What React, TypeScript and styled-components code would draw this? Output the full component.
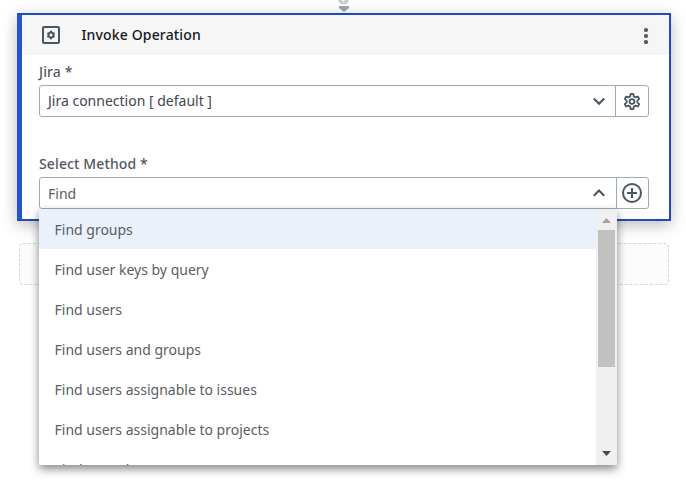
import React from "react";
import styled, { createGlobalStyle } from "styled-components";

const GlobalStyle = createGlobalStyle`
  * { box-sizing: border-box; }
  body {
    margin: 0;
    background: #fff;
    overflow: hidden;
    font-family: "Noto Sans", sans-serif;
    font-size: 14px;
    color: #595d64;
  }
`;

const Canvas = styled.main`
  width: 686px;
  height: 486px;
  overflow: hidden;
  display: flex;
  flex-direction: column;
`;

const Connector = styled.div`
  height: 13px;
  padding-left: 337px;
  flex: none;
  svg { display: block; }
`;

const Card = styled.section`
  width: 654px;
  height: 208px;
  flex: none;
  margin-left: 17px;
  background: #fff;
  border: 2px solid #2349b4;
  border-left: 5px solid #2754cb;
  box-shadow: 0 4px 15px rgba(0, 0, 0, 0.27);
  position: relative;
`;

const Header = styled.header`
  height: 40px;
  background: #f6f6f6;
  display: flex;
  align-items: center;
  padding: 0 17px 0 20px;
`;

const Title = styled.h1`
  flex: 1;
  margin: 0 0 0 21.5px;
  font-size: 14px;
  line-height: 20px;
  font-weight: 500;
  letter-spacing: 0.15px;
  color: #17191d;
`;

const Icon = styled.svg`
  display: block;
  flex: none;
`;

const Form = styled.div`
  padding: 7px 20px 0 17px;
`;

const Field = styled.div`
  height: 92px;
`;

const Label = styled.label`
  display: block;
  height: 23px;
  line-height: 20px;
  font-weight: 500;
  letter-spacing: 0.12px;
  color: #54585f;
`;

const ControlRow = styled.div`
  width: 610px;
  height: 32px;
  display: flex;
  border: 1px solid #9eabb3;
  border-radius: 3px;
  position: relative;
`;

const Select = styled.div<{ $dark?: boolean }>`
  flex: 1;
  display: flex;
  align-items: center;
  justify-content: space-between;
  padding: 0 ${(p) => (p.$dark ? 9 : 10)}px ${(p) => (p.$dark ? 1 : 0)}px 8px;
  color: ${(p) => (p.$dark ? "#3f464f" : "#595d64")};
`;

const Action = styled.button<{ $width: number }>`
  width: ${(p) => p.$width}px;
  padding: 0 1px 0 0;
  border: 0;
  border-left: 1px solid #9eabb3;
  background: none;
  display: flex;
  align-items: center;
  justify-content: center;
`;

const Menu = styled.div`
  position: absolute;
  z-index: 1;
  top: 31px;
  left: -1px;
  width: 578px;
  height: 256px;
  background: #fff;
  display: flex;
  overflow: hidden;
  border-radius: 0 0 2px 2px;
`;

const MenuShadow = styled.div`
  position: absolute;
  top: 31px;
  left: -1px;
  width: 578px;
  height: 256px;
  border-radius: 0 0 2px 2px;
  box-shadow: 0 4px 10px rgba(0, 0, 0, 0.48);
  clip-path: inset(-4px -24px -24px -24px);
`;

const Options = styled.div`
  flex: 1;
`;

const Option = styled.div<{ $active?: boolean }>`
  height: 40px;
  line-height: 42px;
  padding-left: 15.5px;
  background: ${(p) => (p.$active ? "#eaf1fb" : "#fff")};
`;

const Scrollbar = styled.div`
  width: 21px;
  background: #f0f0f0;
  display: flex;
  flex-direction: column;
  align-items: center;
  justify-content: space-between;
`;

const Thumb = styled.div`
  width: 17px;
  height: 137px;
  background: #c1c1c1;
  margin-bottom: auto;
`;

const ScrollArrow = styled.svg`
  display: block;
  width: 21px;
  height: 21px;
  flex: none;
`;

const DropZone = styled.div`
  width: 650px;
  height: 42px;
  flex: none;
  margin: 22px 0 0 19px;
  background: #fcfcfc;
  border: 1px dashed #d3d6d9;
  border-radius: 4px;
`;

const methods = [
  "Find groups",
  "Find user keys by query",
  "Find users",
  "Find users and groups",
  "Find users assignable to issues",
  "Find users assignable to projects",
  "Find users by query",
];

const gearPath = (cx: number, cy: number, outer: number, inner: number, tooth = 0.2, root = 0.34) => {
  const points: string[] = [];
  for (let i = 0; i < 6; i++) {
    const a = (i * Math.PI) / 3 - Math.PI / 2;
    [[-root, inner], [-tooth, outer], [tooth, outer], [root, inner]].forEach(([d, r]) => {
      points.push(`${(cx + Math.cos(a + d) * r).toFixed(2)} ${(cy + Math.sin(a + d) * r).toFixed(2)}`);
    });
  }
  return `M${points.join("L")}Z`;
};

const Chevron = ({ up }: { up?: boolean }) => (
  <Icon width="14" height="14" viewBox="0 0 14 14" fill="none" stroke="#495762" strokeWidth="2.1">
    <path d={up ? "M1.8 9.7L7 4.5L12.2 9.7" : "M1.8 4.5L7 9.7L12.2 4.5"} />
  </Icon>
);

export default function App() {
  return (
    <>
      <GlobalStyle />
      <Canvas>
        <Connector>
          <svg width="14" height="13" viewBox="0 0 14 13">
            <circle cx="6.5" cy="-1" r="5.5" fill="#c7cfd4" />
            <path d="M6.5 -2V2M4.5 0H8.5" stroke="#f5f7f8" strokeWidth="1.2" />
            <path d="M2 6H12V8L7 12L2 8Z" fill="#9ca7ad" />
          </svg>
        </Connector>
        <Card>
          <Header>
            <Icon width="18" height="18" viewBox="0 0 18 18" fill="none" stroke="#495762">
              <rect x="1" y="1" width="16" height="16" rx="1" strokeWidth="2" />
              <path
                d={`${gearPath(9, 9, 4.3, 3.4, 0.26, 0.34)}M10.5 9A1.5 1.5 0 1 0 7.5 9A1.5 1.5 0 1 0 10.5 9Z`}
                fill="#495762"
                fillRule="evenodd"
                stroke="none"
              />
            </Icon>
            <Title>Invoke Operation</Title>
            <Icon width="12" height="18" viewBox="0 0 12 18" fill="#495762">
              <circle cx="6" cy="4" r="2.1" />
              <circle cx="6" cy="10" r="2.1" />
              <circle cx="6" cy="16" r="2.1" />
            </Icon>
          </Header>
          <Form>
            <Field>
              <Label>Jira *</Label>
              <ControlRow>
                <Select $dark>
                  Jira connection [ default ]
                  <Chevron />
                </Select>
                <Action $width={33} aria-label="Configure connection">
                  <Icon width="18" height="18" viewBox="0 0 18 18" fill="none" stroke="#495762" strokeWidth="1.8" strokeLinejoin="round">
                    <path d={gearPath(9, 9.5, 7.7, 5.5, 0.18, 0.32)} />
                    <circle cx="9" cy="9.5" r="2.4" />
                  </Icon>
                </Action>
              </ControlRow>
            </Field>
            <Field>
              <Label>Select Method *</Label>
              <ControlRow>
                <Select>
                  Find
                  <Chevron up />
                </Select>
                <Action $width={32} aria-label="Add method">
                  <Icon width="20" height="20" viewBox="0 0 20 20" fill="none" stroke="#495762" strokeWidth="2">
                    <circle cx="10" cy="10" r="9" />
                    <path d="M10 5V15M5 10H15" />
                  </Icon>
                </Action>
                <MenuShadow />
                <Menu>
                  <Options>
                    {methods.map((method, index) => (
                      <Option key={method} $active={index === 0}>{method}</Option>
                    ))}
                  </Options>
                  <Scrollbar>
                    <ScrollArrow viewBox="0 0 21 21"><path d="M6 14L10.5 9L15 14Z" fill="#a3a3a3" /></ScrollArrow>
                    <Thumb />
                    <ScrollArrow viewBox="0 0 21 21"><path d="M6 7L10.5 12L15 7Z" fill="#4b4b4b" /></ScrollArrow>
                  </Scrollbar>
                </Menu>
              </ControlRow>
            </Field>
          </Form>
        </Card>
        <DropZone />
      </Canvas>
    </>
  );
}
